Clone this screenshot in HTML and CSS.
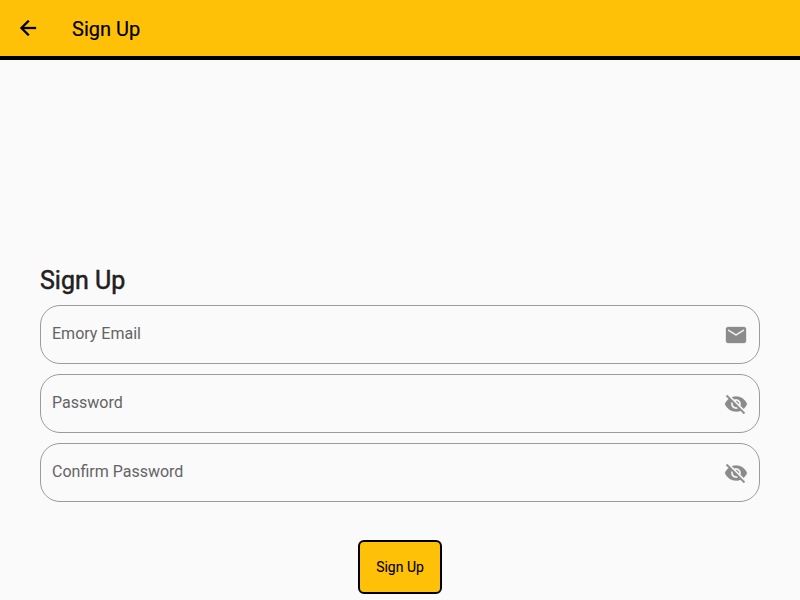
FILE: index.html
```html
<!DOCTYPE html>
<html lang="en">
<head>
<meta charset="utf-8">
<title>Sign Up</title>
<link rel="stylesheet" href="styles.css">
</head>
<body>
<header class="app-bar">
  <svg class="icon back" viewBox="0 0 24 24"><path d="M20 11H7.83l5.59-5.59L12 4l-8 8 8 8 1.41-1.41L7.83 13H20v-2z"/></svg>
  <div class="bar-title">Sign Up</div>
</header>
<main class="form">
  <h1 class="heading">Sign Up</h1>
  <div class="field"><span class="label">Emory Email</span>
    <svg class="icon outlined" viewBox="0 0 24 24"><path d="M20 4H4c-1.1 0-1.99.9-1.99 2L2 18c0 1.1.9 2 2 2h16c1.1 0 2-.9 2-2V6c0-1.1-.9-2-2-2zm0 4l-8 5-8-5V6l8 5 8-5v2z"/></svg>
  </div>
  <div class="field"><span class="label">Password</span>
    <svg class="icon outlined" viewBox="0 0 24 24"><path d="M12 7c2.76 0 5 2.24 5 5 0 .65-.13 1.26-.36 1.83l2.92 2.92c1.51-1.26 2.7-2.89 3.43-4.75-1.73-4.39-6-7.5-11-7.5-1.4 0-2.74.25-3.98.7l2.16 2.16C10.74 7.13 11.35 7 12 7zM2 4.27l2.28 2.28.46.46C3.08 8.3 1.78 10.02 1 12c1.73 4.39 6 7.5 11 7.5 1.55 0 3.03-.3 4.38-.84l.42.42L19.73 22 21 20.73 3.27 3 2 4.27zM7.53 9.8l1.55 1.55c-.05.21-.08.43-.08.65 0 1.66 1.34 3 3 3 .22 0 .44-.03.65-.08l1.55 1.55c-.67.33-1.41.53-2.2.53-2.76 0-5-2.24-5-5 0-.79.2-1.53.53-2.2zm4.31-.78l3.15 3.15.02-.16c0-1.66-1.34-3-3-3l-.17.01z"/></svg>
  </div>
  <div class="field"><span class="label">Confirm Password</span>
    <svg class="icon outlined" viewBox="0 0 24 24"><path d="M12 7c2.76 0 5 2.24 5 5 0 .65-.13 1.26-.36 1.83l2.92 2.92c1.51-1.26 2.7-2.89 3.43-4.75-1.73-4.39-6-7.5-11-7.5-1.4 0-2.74.25-3.98.7l2.16 2.16C10.74 7.13 11.35 7 12 7zM2 4.27l2.28 2.28.46.46C3.08 8.3 1.78 10.02 1 12c1.73 4.39 6 7.5 11 7.5 1.55 0 3.03-.3 4.38-.84l.42.42L19.73 22 21 20.73 3.27 3 2 4.27zM7.53 9.8l1.55 1.55c-.05.21-.08.43-.08.65 0 1.66 1.34 3 3 3 .22 0 .44-.03.65-.08l1.55 1.55c-.67.33-1.41.53-2.2.53-2.76 0-5-2.24-5-5 0-.79.2-1.53.53-2.2zm4.31-.78l3.15 3.15.02-.16c0-1.66-1.34-3-3-3l-.17.01z"/></svg>
  </div>
  <button class="submit" type="button">Sign Up</button>
</main>
</body>
</html>
```
FILE: styles.css
```css
* { box-sizing: border-box; }
body {
  margin: 0;
  height: 600px;
  display: flex;
  flex-direction: column;
  overflow: hidden;
  background: #fafafa;
  font-family: Roboto, sans-serif;
}
.app-bar {
  height: 60px;
  flex: none;
  display: flex;
  align-items: center;
  padding-left: 16px;
  background: #ffc107;
  border-bottom: 4px solid #000;
}
.icon { width: 24px; height: 24px; flex: none; fill: #8b8b8b; }
.outlined { stroke: #8b8b8b; stroke-width: 0.35px; }
.back { fill: #000; stroke: #000; stroke-width: 0.3px; }
.bar-title {
  margin-left: 32px;
  padding-top: 2px;
  font-size: 20px;
  font-weight: 400;
  line-height: 24px;
  -webkit-text-stroke: 0.2px #000;
}
.form {
  flex: 1;
  display: flex;
  flex-direction: column;
  justify-content: flex-end;
  padding: 0 40px 6px;
}
.heading {
  margin: 0 0 9px;
  font-size: 25px;
  line-height: 30px;
  font-weight: 400;
  color: #212121;
  -webkit-text-stroke: 0.5px #212121;
}
.field {
  height: 59px;
  margin-bottom: 10px;
  padding: 0 11px;
  display: flex;
  align-items: center;
  justify-content: space-between;
  border: 1px solid #9b9b9b;
  border-radius: 20px;
}
.label {
  padding-bottom: 2px;
  font-size: 16px;
  line-height: 20px;
  color: #646464;
}
.submit {
  align-self: center;
  width: 84px;
  height: 54px;
  margin-top: 28px;
  padding: 0;
  border: 2px solid #000;
  border-radius: 6px;
  background: #ffc107;
  color: #000;
  font: 400 14px/20px Roboto, sans-serif;
  -webkit-text-stroke: 0.1px #000;
}
```
